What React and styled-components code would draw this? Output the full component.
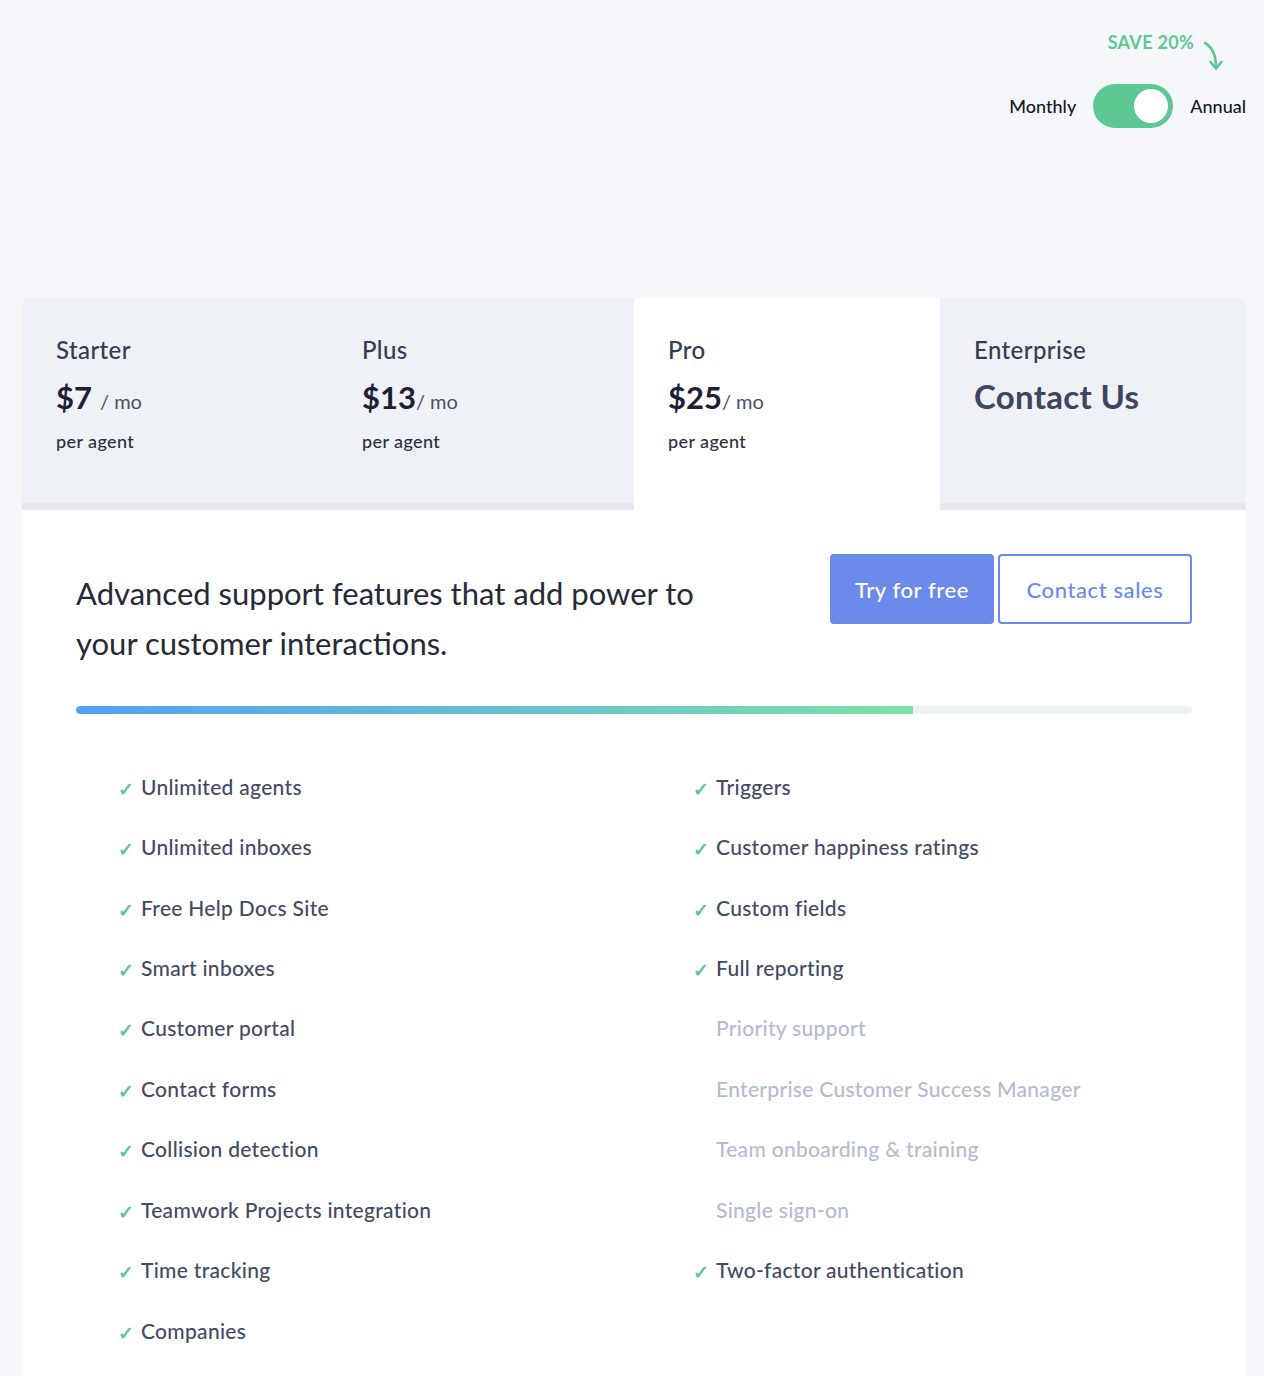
import React from "react";
import styled, { createGlobalStyle } from "styled-components";

const GlobalStyle = createGlobalStyle`
  html, body { margin: 0; padding: 0; }
  body {
    background: #f5f7fb;
    font-family: Lato, "Noto Sans", sans-serif;
    -webkit-font-smoothing: antialiased;
  }
`;

const Page = styled.div`
  padding: 0 18px 0 22px;
`;

const TopBar = styled.div`
  height: 298px;
  display: flex;
  justify-content: flex-end;
  align-items: flex-start;
`;

const ToggleBlock = styled.div`
  display: flex;
  flex-direction: column;
  align-items: flex-end;
  padding-top: 31px;
`;

const SaveRow = styled.div`
  display: flex;
  align-items: flex-start;
  margin-right: 18px;
  height: 53px;
`;

const SaveText = styled.span`
  color: #5ec894;
  font-weight: 700;
  font-size: 18px;
  letter-spacing: 0.3px;
  line-height: 22px;
`;

const ToggleRow = styled.div`
  display: flex;
  align-items: center;
  gap: 17px;
`;

const ToggleLabel = styled.span`
  font-size: 18px;
  color: #15171f;
  font-weight: 500;
`;

const Switch = styled.div`
  width: 80px;
  height: 44px;
  border-radius: 22px;
  background: #5ec894;
  display: flex;
  align-items: center;
  justify-content: ${(p) => (p.$on ? "flex-end" : "flex-start")};
  padding: 0 5px;
  box-sizing: border-box;
`;

const Knob = styled.div`
  width: 34px;
  height: 34px;
  border-radius: 50%;
  background: #fff;
`;

const Card = styled.div`
  width: 1224px;
`;

const Tabs = styled.div`
  display: grid;
  grid-template-columns: repeat(4, 1fr);
`;

const Tab = styled.div`
  height: 212px;
  box-sizing: border-box;
  padding: 38px 34px 0;
  background: ${(p) => (p.$active ? "#ffffff" : "#eef1f6")};
  box-shadow: ${(p) => (p.$active ? "none" : "inset 0 -7px 0 #e6e9ef")};
  border-top-left-radius: ${(p) => (p.$first ? "8px" : p.$active ? "3px" : "0")};
  border-top-right-radius: ${(p) => (p.$last ? "10px" : p.$active ? "3px" : "0")};
`;

const TabName = styled.div`
  font-size: 24px;
  letter-spacing: 0.4px;
  line-height: 28px;
  color: #363b52;
  font-weight: 500;
`;

const PriceRow = styled.div`
  margin-top: 14px;
  display: flex;
  align-items: baseline;
  height: 36px;
`;

const Amount = styled.span`
  font-size: 31px;
  font-weight: 700;
  color: #1e2135;
`;

const Per = styled.span`
  font-size: 20px;
  color: #4b5068;
  margin-left: ${(p) => (p.$spaced ? "8px" : "0")};
`;

const PerAgent = styled.div`
  margin-top: 16px;
  font-size: 18px;
  letter-spacing: 0.4px;
  color: #2a2e40;
  font-weight: 500;
`;

const ContactUs = styled.div`
  margin-top: 12px;
  font-size: 33px;
  letter-spacing: 0.3px;
  font-weight: 700;
  color: #40455f;
`;

const Body = styled.div`
  background: #fff;
  padding: 44px 54px 40px;
`;

const Intro = styled.div`
  display: flex;
  justify-content: space-between;
  align-items: flex-start;
`;

const Heading = styled.h2`
  margin: 14px 0 0;
  max-width: 660px;
  font-size: 31px;
  letter-spacing: 0;
  line-height: 50px;
  font-weight: 400;
  color: #262936;
`;

const Buttons = styled.div`
  display: flex;
  gap: 4px;
`;

const Button = styled.button`
  height: 70px;
  width: ${(p) => p.$w}px;
  border-radius: 4px;
  font-family: inherit;
  font-size: 22px;
  letter-spacing: 0.6px;
  font-weight: 500;
  cursor: pointer;
  box-sizing: border-box;
  background: ${(p) => (p.$primary ? "#6b8ae9" : "#fff")};
  color: ${(p) => (p.$primary ? "#fff" : "#6b8ae9")};
  border: 2px solid #6b8ae9;
`;

const Track = styled.div`
  margin-top: 38px;
  height: 8px;
  border-radius: 4px;
  background: #eef1f6;
  overflow: hidden;
`;

const Fill = styled.div`
  height: 100%;
  border-radius: 4px 0 0 4px;
  background: linear-gradient(90deg, #51a3f3 0%, #66c3cf 55%, #7fe2a3 100%);
`;

const Features = styled.div`
  margin-top: 42px;
  padding-left: 42px;
  display: grid;
  grid-template-columns: 575px 1fr;
`;

const Column = styled.ul`
  list-style: none;
  margin: 0;
  padding: 0;
`;

const Item = styled.li`
  height: 60.45px;
  display: flex;
  align-items: center;
  font-size: 21px;
  letter-spacing: 0.3px;
  font-weight: 500;
  color: ${(p) => (p.$off ? "#b4bad0" : "#434a63")};
`;

const Check = styled.span`
  width: 23px;
  flex: none;
  color: #5ec894;
  font-size: 19px;
  font-weight: 700;
  padding-top: 4px;
  visibility: ${(p) => (p.$hidden ? "hidden" : "visible")};
`;

const plans = [
  { name: "Starter", amount: "$7", spaced: true },
  { name: "Plus", amount: "$13" },
  { name: "Pro", amount: "$25", active: true },
  { name: "Enterprise", contact: true },
];

const left = [
  "Unlimited agents",
  "Unlimited inboxes",
  "Free Help Docs Site",
  "Smart inboxes",
  "Customer portal",
  "Contact forms",
  "Collision detection",
  "Teamwork Projects integration",
  "Time tracking",
  "Companies",
];

const right = [
  ["Triggers"],
  ["Customer happiness ratings"],
  ["Custom fields"],
  ["Full reporting"],
  ["Priority support", true],
  ["Enterprise Customer Success Manager", true],
  ["Team onboarding & training", true],
  ["Single sign-on", true],
  ["Two-factor authentication"],
];

const Arrow = () => (
  <svg width="26" height="34" viewBox="0 0 26 34" fill="none" style={{ marginLeft: 8, marginTop: 9 }}>
    <path d="M3 3 C 10 7, 14 14, 14 27" stroke="#5ec894" strokeWidth="2.6" strokeLinecap="round" fill="none" />
    <path d="M8.5 22 L14 28.5 L19.5 22" stroke="#5ec894" strokeWidth="2.6" strokeLinecap="round" strokeLinejoin="round" fill="none" />
  </svg>
);

export default function App() {
  return (
    <Page>
      <GlobalStyle />
      <TopBar>
        <ToggleBlock>
          <SaveRow>
            <SaveText>SAVE 20%</SaveText>
            <Arrow />
          </SaveRow>
          <ToggleRow>
            <ToggleLabel>Monthly</ToggleLabel>
            <Switch $on>
              <Knob />
            </Switch>
            <ToggleLabel>Annual</ToggleLabel>
          </ToggleRow>
        </ToggleBlock>
      </TopBar>
      <Card>
        <Tabs>
          {plans.map((p, i) => (
            <Tab key={p.name} $active={p.active} $first={i === 0} $last={i === plans.length - 1}>
              <TabName>{p.name}</TabName>
              {p.contact ? (
                <ContactUs>Contact Us</ContactUs>
              ) : (
                <>
                  <PriceRow>
                    <Amount>{p.amount}</Amount>
                    <Per $spaced={p.spaced}>/ mo</Per>
                  </PriceRow>
                  <PerAgent>per agent</PerAgent>
                </>
              )}
            </Tab>
          ))}
        </Tabs>
        <Body>
          <Intro>
            <Heading>Advanced support features that add power to your customer interactions.</Heading>
            <Buttons>
              <Button $primary $w={164}>Try for free</Button>
              <Button $w={194}>Contact sales</Button>
            </Buttons>
          </Intro>
          <Track>
            <Fill style={{ width: "75%" }} />
          </Track>
          <Features>
            <Column>
              {left.map((t) => (
                <Item key={t}>
                  <Check>✓</Check>
                  {t}
                </Item>
              ))}
            </Column>
            <Column>
              {right.map(([t, off]) => (
                <Item key={t} $off={off}>
                  <Check $hidden={off}>✓</Check>
                  {t}
                </Item>
              ))}
            </Column>
          </Features>
        </Body>
      </Card>
    </Page>
  );
}
